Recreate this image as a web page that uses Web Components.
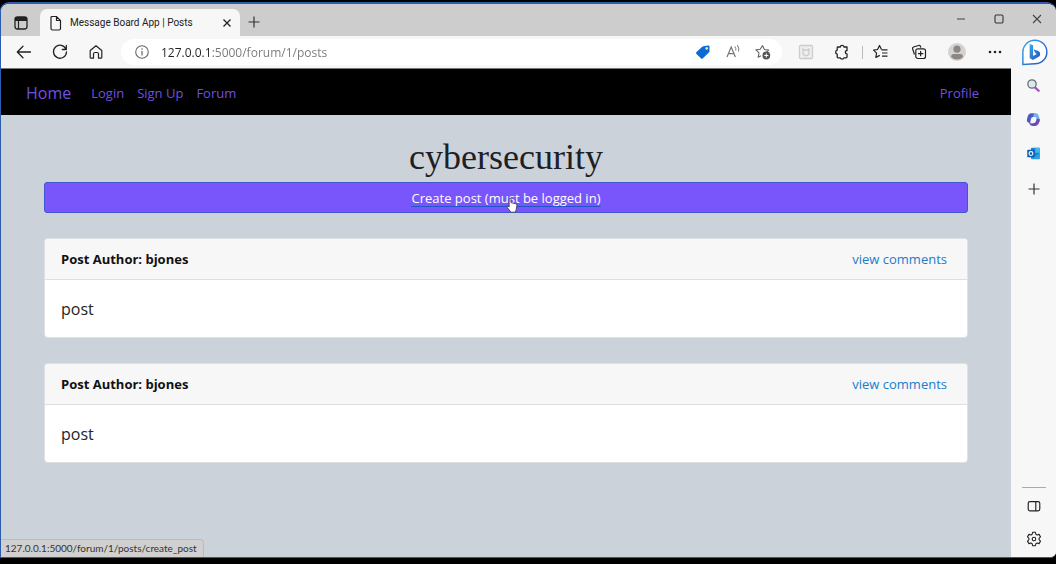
<!DOCTYPE html>
<html lang="en">
<head>
<meta charset="utf-8">
<title>Message Board App | Posts</title>
<style>
html, body { margin: 0; height: 100%; background: #000; }
body { font-family: "Open Sans", "Noto Sans", sans-serif; font-size: 14px; color: #212529; }
</style>
</head>
<body>
<browser-window></browser-window>
<script>
const ICONS = {
  tabs: '<rect x="3" y="3" width="12" height="12" rx="2.5" fill="none" stroke="#222" stroke-width="1.3"/><path d="M3 7V5.5A2.5 2.5 0 0 1 5.500 3h7A2.500 2.500 0 0 1 15 5.500V7z" fill="#222"/><path d="M6.500 7v8" stroke="#222" stroke-width="1.200"/>',
  page: '<path d="M4.500 2.500h5l4 4v8a1.500 1.500 0 0 1-1.500 1.500H5.500A1.500 1.500 0 0 1 4 14.500V3.500a1 1 0 0 1 1-1zM9.500 2.500v4h4" fill="none" stroke="#222" stroke-width="1.200"/>',
  close: '<path d="M5.500 5.500l7 7M12.500 5.500l-7 7" stroke="#222" stroke-width="1.300"/>',
  plus: '<path d="M9 3.500v11M3.500 9h11" stroke="#333" stroke-width="1.200"/>',
  min: '<path d="M5 9h8" stroke="#444" stroke-width="1.100"/>',
  max: '<rect x="5" y="5" width="8" height="8" rx="1.200" fill="none" stroke="#333" stroke-width="1.100"/>',
  wclose: '<path d="M5 5l8 8M13 5l-8 8" stroke="#444" stroke-width="1.100"/>',
  back: '<path d="M15.500 9H2.500M8 3.200L2.300 9 8 14.800" fill="none" stroke="#222" stroke-width="1.300" stroke-linecap="round" stroke-linejoin="round"/>',
  reload: '<path d="M15 6.200A6.500 6.500 0 1 0 15.500 9M15.300 2.500v4h-4" fill="none" stroke="#222" stroke-width="1.300" stroke-linecap="round" stroke-linejoin="round"/>',
  home: '<path d="M3.200 7.500L9 2.700l5.800 4.800v6.800a.9.900 0 0 1-.9.900H11.500V11a1.500 1.500 0 0 0-1.500-1.500H8A1.500 1.500 0 0 0 6.500 11v4.200H4.100a.9.900 0 0 1-.9-.9z" fill="none" stroke="#222" stroke-width="1.200" stroke-linejoin="round"/>',
  info: '<circle cx="9" cy="9" r="6.300" fill="none" stroke="#666" stroke-width="1.100"/><path d="M9 8v4.500" stroke="#666" stroke-width="1.200"/><circle cx="9" cy="6" r=".8" fill="#666"/>',
  tag: '<path d="M9.500 3.200L14 2.500a1.300 1.300 0 0 1 1.500 1.300v4.500a1.500 1.500 0 0 1-.4 1L9 15.200a1.500 1.500 0 0 1-2.100 0L2.500 11a1.500 1.500 0 0 1 0-2.100L8.500 3.600a2 2 0 0 1 1-.4z" fill="#0a6bd6"/><circle cx="12.700" cy="5.400" r="1.300" fill="#f3e58a"/>',
  read: '<path d="M3 14L7.200 4 11.400 14M4.500 10.700h5.400" fill="none" stroke="#777" stroke-width="1.200"/><path d="M10.800 3.500q1.500 1.800 1 4M13.200 2q2.400 2.800 1.400 6.500" fill="none" stroke="#777"/>',
  staradd: '<path d="M8.500 2.500l1.900 4 4.300.6-3.100 3M7 12.700l-2.800 1.500.8-4.300-3.100-3 4.300-.6L8.500 2.500" fill="none" stroke="#666" stroke-width="1.100" stroke-linejoin="round"/><circle cx="12.300" cy="12.500" r="3.900" fill="#555"/><path d="M12.300 10.500v4M10.300 12.500h4" stroke="#fff"/>',
  shield: '<rect x="2.500" y="2.500" width="13" height="13" rx="1" fill="#eee" stroke="#ccc" stroke-width="1.300"/><path d="M6 6l1.500 1h3L12 6v4q0 2-3 3-3-1-3-3z" fill="none" stroke="#ccc" stroke-width="1.300"/>',
  puzzle: '<path d="M5 4h2.200a2 2 0 0 1 3.900 0H14v3.500a1.500 1.500 0 1 0 0 3.300V14a.8.800 0 0 1-.8.800H11a2 2 0 0 1-3.800 0H5a.8.800 0 0 1-.8-.8v-2.900a2 2 0 0 1 0-3.900V4.800A.8.800 0 0 1 5 4z" fill="none" stroke="#222" stroke-width="1.300" stroke-linejoin="round"/>',
  favs: '<path d="M9.500 6.500L7.500 2.500l-1.900 4-4 .6 3 3-.8 4.300 4-2" fill="none" stroke="#222" stroke-width="1.200" stroke-linejoin="round"/><path d="M9.500 6.800h6M10 10h5.500M10 13.200h5.500" stroke="#222" stroke-width="1.200"/>',
  coll: '<path d="M4.500 11.500L2.600 5.800A1.500 1.500 0 0 1 3.500 4l5-1.500a1.500 1.500 0 0 1 2 1l.3 1.200" fill="none" stroke="#222" stroke-width="1.200"/><rect x="5.800" y="5.800" width="9.700" height="9.700" rx="2" fill="none" stroke="#222" stroke-width="1.200"/><path d="M10.600 8v5.300M8 10.600h5.300" stroke="#222" stroke-width="1.200"/>',
  user: '<circle cx="9" cy="9" r="9" fill="#d5d2d0"/><circle cx="9" cy="6.200" r="3.600" fill="#8b8784"/><path d="M3 14q0-3 3-3h6q3 0 3 3-2.500 2.500-6 2.500T3 14z" fill="#8b8784"/>',
  more: '<g fill="#222"><circle cx="4" cy="9" r="1.300"/><circle cx="9" cy="9" r="1.300"/><circle cx="14" cy="9" r="1.300"/></g>',
  bing: '<defs><linearGradient id="g" x1="0" y1="0" x2="1" y2="1"><stop offset="0" stop-color="#36a9e8"/><stop offset="1" stop-color="#2452c0"/></linearGradient></defs><path d="M.6 17.600V9A8.300 8.200 0 1 1 9 17.200z" fill="#fff" stroke="url(#g)" stroke-width="1"/><path d="M5.300 3.400l2.400 1v7.400l2.500-1.500-1.200-.7-1-2.500 3.300 1.200q1.400.6 1.300 2.200-.1 1.300-1.300 2l-3.800 2.100-2.200-1.400z" fill="url(#g)"/>',
  search: '<path d="M11 11.500l4.200 3.800" stroke="#a94bd5" stroke-width="2.800" stroke-linecap="round"/><circle cx="7.200" cy="7.200" r="5" fill="#dbe8f2" stroke="#666c73" stroke-width="1.500"/>',
  m365: '<path d="M9.500 1.500H7A5 5 0 0 0 2 5.500L1 9.500q0 2 1.500 3l2.500 1L6 8q.5-2 2.500-2h4q-.5-4-3-4.500z" fill="#4b5bc4"/><path d="M9.500 1.500h2.500q2.200.2 3 2.500l1.700 5q.5 2-1 3.500L12.500 11.500l.5-3.500q-.5-2-2-2H8.500z" fill="#72b1ea"/><path d="M16.700 9l-1 3.500q-1.400 4-5 4.300H8q-3-.2-4.500-3.300H8.500q2.500 0 3.500-2.500l1-3.500z" fill="#6b4bb5"/><circle cx="9.200" cy="9.500" r="2.400" fill="#f7f7f7"/>',
  outlook: '<rect x="6" y="2" width="10.500" height="13" rx="1" fill="#1389d8"/><path d="M11 2h5.500v6H11z" fill="#45b5ec"/><path d="M6 15l10.500-6v6.200a.9.900 0 0 1-1 .8H7a1 1 0 0 1-1-1z" fill="#2f9fe4"/><rect x="1.500" y="4.500" width="9" height="9" rx="1" fill="#0a5fb4"/><circle cx="6" cy="9" r="2.300" fill="none" stroke="#fff" stroke-width="1.300"/>',
  panel: '<rect x="2.500" y="4" width="13" height="10.500" rx="2" fill="none" stroke="#222" stroke-width="1.300"/><path d="M11 4v10.500" stroke="#222" stroke-width="1.300"/>',
  gear: '<path d="M7.400 1.500h3.200l.5 2.200 1.400.8 2.200-.7 1.600 2.800L14.700 8.200v1.600l1.600 1.600-1.600 2.800-2.200-.7-1.400.8-.5 2.200H7.400l-.5-2.200-1.400-.8-2.200.7-1.600-2.800 1.600-1.600V8.200L1.700 6.600l1.600-2.800 2.200.7 1.400-.8z" fill="none" stroke="#222" stroke-width="1.200" stroke-linejoin="round"/><circle cx="9" cy="9" r="2" fill="none" stroke="#222" stroke-width="1.200"/>'
};

function define(name, render) {
  customElements.define(name, class extends HTMLElement {
    constructor() {
      super();
      this.attachShadow({ mode: "open" });
    }
    connectedCallback() {
      const t = document.createElement("template");
      t.innerHTML = render(this);
      this.shadowRoot.replaceChildren(t.content.cloneNode(true));
    }
  });
}

define("icon-button", el => `
<style>
:host { display: flex; flex: none; }
button { all: unset; display: grid; place-items: center; width: 24px; height: 24px; cursor: pointer; }
svg { width: var(--icon-size, 18px); height: var(--icon-size, 18px); overflow: visible; }
</style>
<button type="button" aria-label="${el.getAttribute("label")}"><svg viewBox="0 0 18 18" aria-hidden="true">${ICONS[el.getAttribute("icon")]}</svg></button>`);

define("tab-strip", () => `
<style>
:host { display: flex; height: 32px; background: #cdcdcd; padding: 0 7px 0 8px; box-sizing: border-box; border-radius: 8px 8px 0 0; }
.lead { padding-top: 7px; margin-right: 7px; }
.tab { display: flex; align-items: center; box-sizing: border-box; width: 200px; margin-top: 5px; padding: 0 1px 0 4px; background: #f7f7f7; border-radius: 7px 7px 0 0; font-size: 10px; font-family: Roboto, sans-serif; color: #222; }
.tab span { flex: 1; padding-left: 2px; white-space: nowrap; }
.new { padding: 6px 0 0 2px; }
.win { display: flex; gap: 14px; margin-left: auto; padding-top: 3px; }
</style>
<icon-button class="lead" icon="tabs" label="Tab actions"></icon-button>
<div class="tab"><icon-button icon="page" label="Page"></icon-button><span>Message Board App | Posts</span><icon-button icon="close" label="Close tab"></icon-button></div>
<icon-button class="new" icon="plus" label="New tab"></icon-button>
<div class="win"><icon-button icon="min" label="Minimize"></icon-button><icon-button icon="max" label="Maximize"></icon-button><icon-button icon="wclose" label="Close"></icon-button></div>`);

define("address-bar", () => `
<style>
:host { display: flex; align-items: center; flex: 1; min-width: 0; height: 26px; background: #fff; border-radius: 13px; padding: 0 7px 0 9px; box-sizing: border-box; }
input { flex: 1; min-width: 0; height: 24px; margin-left: 7px; padding: 0; border: 0; outline: 0; font: 12px "Open Sans", sans-serif; color: #707070;
  -webkit-text-fill-color: transparent; background: linear-gradient(90deg, #222 50px, #777 50px); -webkit-background-clip: text; background-clip: text; }
.actions { display: flex; gap: 6px; }
</style>
<icon-button icon="info" label="Site information"></icon-button>
<input type="text" aria-label="Address" value="127.0.0.1:5000/forum/1/posts">
<div class="actions"><icon-button icon="tag" label="Shopping"></icon-button><icon-button icon="read" label="Read aloud"></icon-button><icon-button icon="staradd" label="Add to favorites"></icon-button></div>`);

define("tool-bar", () => `
<style>
:host { display: flex; align-items: center; height: 33px; background: #f7f7f7; padding: 0 4px 0 11px; border-bottom: 1px solid #777; box-sizing: border-box; }
.group { display: flex; gap: 12px; }
.nav { margin-right: 13px; }
.ext { margin-left: 12px; }
.tools { gap: 14px; margin-left: 8px; padding-left: 7px; background: linear-gradient(#bbb, #bbb) left center / 1px 13px no-repeat; }
</style>
<div class="group nav"><icon-button icon="back" label="Back"></icon-button><icon-button icon="reload" label="Refresh"></icon-button><icon-button icon="home" label="Home"></icon-button></div>
<address-bar></address-bar>
<div class="group ext"><icon-button icon="shield" label="Shield"></icon-button><icon-button icon="puzzle" label="Extensions"></icon-button></div>
<div class="group tools"><icon-button icon="favs" label="Favorites"></icon-button><icon-button icon="coll" label="Collections"></icon-button><icon-button icon="user" label="Profile"></icon-button><icon-button icon="more" label="More"></icon-button></div>`);

define("side-bar", () => `
<style>
:host { display: flex; flex-direction: column; align-items: center; width: 45px; box-sizing: border-box; background: #f7f7f7; padding: 3px 0 6px; }
.bing { --icon-size: 26px; margin-bottom: 10px; }
.apps { display: flex; flex-direction: column; gap: 10px; --icon-size: 15px; }
.add { margin-top: 12px; }
hr { width: 24px; margin: auto 0 6px; border: 0; border-top: 1px solid #aaa; }
.foot { display: flex; flex-direction: column; gap: 9px; --icon-size: 16px; }
</style>
<icon-button class="bing" icon="bing" label="Bing"></icon-button>
<div class="apps"><icon-button icon="search" label="Search"></icon-button><icon-button icon="m365" label="Microsoft 365"></icon-button><icon-button icon="outlook" label="Outlook"></icon-button></div>
<icon-button class="add" icon="plus" label="Customize"></icon-button>
<hr>
<div class="foot"><icon-button icon="panel" label="Hide sidebar"></icon-button><icon-button icon="gear" label="Settings"></icon-button></div>`);

define("site-nav", () => `
<style>
:host { display: block; }
nav { display: flex; align-items: center; gap: 13px; height: 46px; padding: 1px 32px 0 25px; box-sizing: border-box; background: #000; }
a { color: #6f51e0; text-decoration: none; font-size: 13px; }
.brand { font-size: 16px; margin-right: 7px; }
.end { margin-left: auto; }
</style>
<nav><a class="brand" href="#home">Home</a><a href="#login">Login</a><a href="#signup">Sign Up</a><a href="#forum">Forum</a><a class="end" href="#profile">Profile</a></nav>`);

define("create-button", () => `
<style>
:host { display: block; position: relative; }
a { display: block; height: 31px; line-height: 30px; box-sizing: border-box; border: 1px solid #3f57cf; border-radius: 3px; background: #7955fc; color: #fff; text-align: center; font-size: 13px; text-decoration: underline #2455c8; text-underline-offset: 3px; }
svg { position: absolute; left: 50%; top: 15px; width: 12px; height: 16px; }
</style>
<a href="#create"><slot></slot></a>
<svg viewBox="0 0 10 14" aria-hidden="true"><path d="M2.500 7V1.500q.8-1.200 1.600 0V5l4 .8q1.200.3 1.200 1.500L8.700 11l-.8 2.300H4L.8 9q-.5-1.300.7-1.200l1 .9z" fill="#fff" stroke="#333" stroke-width=".7"/></svg>`);

define("post-card", el => `
<style>
:host { display: block; background: #fff; border: 1px solid #dfe2e5; border-radius: 4px; overflow: hidden; font-size: 13px; }
header { display: flex; justify-content: space-between; align-items: center; height: 40px; padding: 0 20px 0 16px; background: #f7f7f7; border-bottom: 1px solid #dfdfdf; }
h2 { margin: 0; font-size: 13px; font-weight: 700; color: #111; }
a { color: #217bcb; text-decoration: none; }
p { margin: 0; padding: 17px 16px 16px; font-size: 16px; line-height: 24px; }
</style>
<header><h2>Post Author: ${el.getAttribute("author")}</h2><a href="#comments">view comments</a></header>
<p><slot></slot></p>`);

define("status-bubble", () => `
<style>
:host { position: absolute; left: 0; bottom: 0; padding: 0 6px 0 4px; height: 17px; line-height: 17px; background: #d0d0d0; border: 1px solid #bbb; border-left: 0; border-bottom: 0; border-radius: 0 4px 0 0; font-size: 10px; font-family: Lato, sans-serif; color: #333; }
</style><slot></slot>`);

define("board-page", () => `
<style>
:host { display: block; flex: 1; min-height: 0; position: relative; background: #cbd2d9; }
main { padding: 24px 43px 0; }
h1 { margin: 0 0 7px; font: 400 36px/36px "Liberation Serif", serif; text-align: center; color: #1c2026; }
.posts { display: grid; gap: 25px; margin-top: 25px; }
</style>
<site-nav></site-nav>
<main>
<h1>cybersecurity</h1>
<create-button>Create post (must be logged in)</create-button>
<div class="posts"><post-card author="bjones">post</post-card><post-card author="bjones">post</post-card></div>
</main>
<status-bubble>127.0.0.1:5000/forum/1/posts/create_post</status-bubble>`);

define("browser-window", () => `
<style>
:host { display: flex; flex-direction: column; height: 100vh; box-sizing: border-box; padding: 2px 0 6px; }
.frame { flex: 1; display: flex; flex-direction: column; min-height: 0; border: 2px solid #2c5cae; border-width: 2px 0 1px 1px; border-radius: 9px 9px 6px 0; background: #f7f7f7; overflow: hidden; }
.body { display: flex; flex: 1; min-height: 0; }
.view { display: flex; flex-direction: column; flex: 1; min-width: 0; }
</style>
<div class="frame"><tab-strip></tab-strip><div class="body"><div class="view"><tool-bar></tool-bar><board-page></board-page></div><side-bar></side-bar></div></div>`);
</script>
</body>
</html>
